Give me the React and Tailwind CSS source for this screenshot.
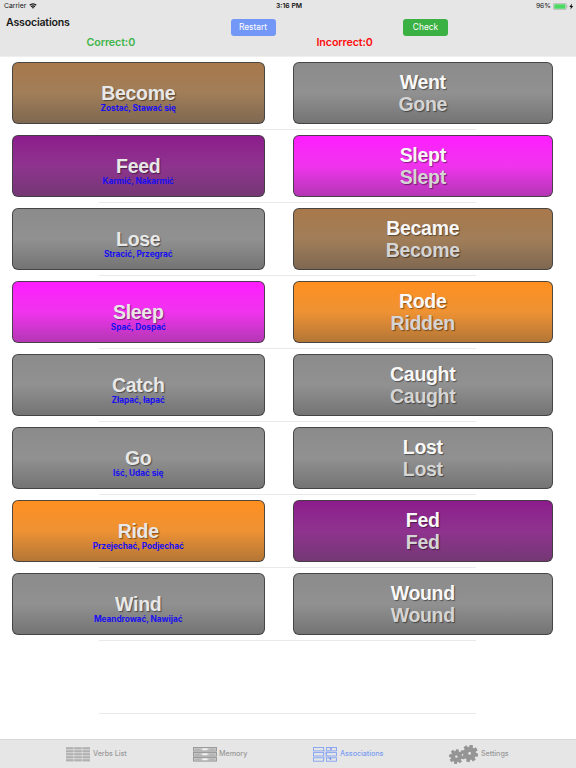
import React from 'react'

const styles = {
  brown: 'bg-linear-to-b from-[#a8784a] via-[#a17e59] to-[#7e6750]',
  purple: 'bg-linear-to-b from-[#8c1a8c] via-[#8f338f] to-[#733873]',
  gray: 'bg-linear-to-b from-[#8b8b8b] via-[#919191] to-[#737373]',
  pink: 'bg-linear-to-b from-[#ff1aff] via-[#f033ee] to-[#b236b2]',
  orange: 'bg-linear-to-b from-[#ff8f1e] via-[#ee9233] to-[#b27536]'
}

const rows = [
  { verb: 'Become', hint: 'Zostać, Stawać się', left: 'brown', past: 'Went', participle: 'Gone', right: 'gray' },
  { verb: 'Feed', hint: 'Karmić, Nakarmić', left: 'purple', past: 'Slept', participle: 'Slept', right: 'pink' },
  { verb: 'Lose', hint: 'Stracić, Przegrać', left: 'gray', past: 'Became', participle: 'Become', right: 'brown' },
  { verb: 'Sleep', hint: 'Spać, Dospać', left: 'pink', past: 'Rode', participle: 'Ridden', right: 'orange' },
  { verb: 'Catch', hint: 'Złapać, łapać', left: 'gray', past: 'Caught', participle: 'Caught', right: 'gray' },
  { verb: 'Go', hint: 'Iść, Udać się', left: 'gray', past: 'Lost', participle: 'Lost', right: 'gray' },
  { verb: 'Ride', hint: 'Przejechać, Podjechać', left: 'orange', past: 'Fed', participle: 'Fed', right: 'purple' },
  { verb: 'Wind', hint: 'Meandrować, Nawijać', left: 'gray', past: 'Wound', participle: 'Wound', right: 'gray' }
]

function WifiIcon() {
  return (
    <svg className="w-2 h-[6px]" viewBox="0 0 18 14" fill="none" stroke="#111" strokeWidth="3">
      <path d="M1.5 5.2a10.6 10.6 0 0 1 15 0" />
      <path d="M4.6 8.6a6.2 6.2 0 0 1 8.8 0" />
      <path d="M9 13.5l-2.6-2.8a3.6 3.6 0 0 1 5.2 0z" fill="#111" stroke="none" />
    </svg>
  )
}

function BatteryIcon() {
  return (
    <svg className="w-[21px] h-[7px]" viewBox="0 0 42 14">
      <rect x="0.7" y="0.7" width="26" height="12.6" rx="2.5" fill="#e6e6e6" stroke="#aaa" strokeWidth="1.4" />
      <rect x="2.5" y="2.5" width="22.4" height="9" rx="1" fill="#4cd964" />
      <path d="M28.3 4.5q2 2.5 0 5z" fill="#999" />
      <path d="M38 1l-5.5 7h3.2L35 13l5.5-7h-3.2z" fill="#111" />
    </svg>
  )
}

function VerbsIcon() {
  return (
    <svg className="w-6 h-[15px]" viewBox="0 0 24 15" fill="#b0b0b0">
      {[0.2, 3.2, 6.2, 9.2, 12.2].map(y =>
        [0, 8.2, 16.4].map(x => <rect key={`${x}-${y}`} x={x} y={y} width="7.6" height="2.2" />)
      )}
    </svg>
  )
}

function MemoryIcon() {
  return (
    <svg className="w-6 h-[15px]" viewBox="0 0 24 15">
      {[0.5, 5.5, 10.5].map(y => (
        <g key={y}>
          <rect x="0.5" y={y} width="23" height="3.6" fill="#c6c6c6" stroke="#959595" strokeWidth="0.9" />
          <rect x="9.3" y={y + 0.9} width="5.2" height="1.8" fill="#f4f4f4" />
          <path d={`M2.5 ${y + 1.8}h5M16.5 ${y + 1.8}h5`} stroke="#adadad" strokeWidth="0.9" />
        </g>
      ))}
    </svg>
  )
}

function AssociationsIcon() {
  return (
    <svg className="w-6 h-[15px]" viewBox="0 0 24 15" fill="none" stroke="#83a2f3" strokeWidth="0.9">
      {[0.5, 5.6, 10.8].map(y => (
        <g key={y}>
          <rect x="0.5" y={y} width="10.1" height="3.4" />
          <rect x="13.4" y={y} width="10.1" height="3.4" />
        </g>
      ))}
      <path d="M10.7 7.5L18 2.4M10.7 2.3L13.3 7.3M14.5 8.5L17.5 12.2M10.7 12.5L13.3 7.5" strokeWidth="0.5" />
      <path d="M16.5 1.6l2.6-.3-.9 2.3zM15.8 11.8l2.5 1.5-.4-2.7z" fill="#6a8df0" stroke="none" />
    </svg>
  )
}

function Gear({ x, y, r, tilt }) {
  return (
    <g transform={`translate(${x} ${y}) rotate(${tilt}) scale(${r / 10})`}>
      {[0, 45, 90, 135, 180, 225, 270, 315].map(a => (
        <path key={a} d="M-2.4-6L-2-10.2h4L2.4-6z" transform={`rotate(${a})`} fill="#959595" />
      ))}
      <circle r="4.7" fill="none" stroke="#959595" strokeWidth="6" />
    </g>
  )
}

function SettingsIcon() {
  return (
    <svg className="w-[29px] h-[19px]" viewBox="0 0 29 19">
      <Gear x={7.4} y={11.6} r={7.2} tilt={8} />
      <Gear x={20.6} y={8.4} r={8.4} tilt={12} />
    </svg>
  )
}

const cardClass = 'h-[62px] rounded-md border border-[#3f3f3f]/90 bg-origin-border text-center font-bold'
const verbClass = "block font-['Liberation_Sans',sans-serif] text-[19.5px] tracking-[-0.3px] [text-shadow:1px_1px_1px_rgba(0,0,0,0.45)]"

export default function App() {
  return (
    <div className="w-[576px] h-[768px] flex flex-col overflow-hidden bg-white font-[Inter,sans-serif]">
      {/* Header */}
      <header className="h-[57px] shrink-0 bg-[#e6e6e6] border-b border-[#efefef]">
        <div className="grid grid-cols-3 items-center h-3 pl-1 pr-0.5 text-[6.8px] leading-3 text-[#111]">
          <div className="flex items-center gap-[3px]">
            <span>Carrier</span>
            <WifiIcon />
          </div>
          <span className="text-center font-semibold">3:16 PM</span>
          <div className="flex items-center justify-end gap-0.5">
            <span>96%</span>
            <BatteryIcon />
          </div>
        </div>
        <div className="flex h-6 pt-[7px]">
          <h1 className="w-[230.5px] pl-1.5 -mt-[3px] text-[10.6px] leading-[14px] tracking-[-0.2px] font-semibold text-[#181818]">Associations</h1>
          <button className="w-[45px] h-[17px] shrink-0 rounded-[3px] bg-[#7397f6] text-[8.4px] leading-[17px] text-white">Restart</button>
          <button className="w-[45px] h-[17px] shrink-0 ml-[127.5px] rounded-[3px] bg-[#3bb143] text-[8.4px] leading-[17px] text-white">Check</button>
        </div>
        <div className="flex text-[10.7px] leading-[14px] tracking-[-0.1px] font-semibold">
          <span className="w-[230px] pl-[86.5px] text-[#3fb54a]">Correct:0</span>
          <span className="pl-[86.5px] text-[#ff0d0d]">Incorrect:0</span>
        </div>
      </header>

      {/* Verb pairs */}
      <main className="flex-1">
        {rows.map(row => (
          <div key={row.verb} className="h-[73px] pt-[5px] pl-[11.5px] flex gap-7 bg-[linear-gradient(#e9e9e9,#e9e9e9)] bg-no-repeat bg-size-[377px_1px] bg-position-[99px_72px]">
            <div className={`${cardClass} ${styles[row.left]} w-[253.5px] pt-5`}>
              <span className={`${verbClass} leading-5 text-[#e8e8e8]`}>{row.verb}</span>
              <span className="block text-[8.3px] leading-[10px] tracking-[-0.06px] text-[#1a10f0]">{row.hint}</span>
            </div>
            <div className={`${cardClass} ${styles[row.right]} w-[259.5px] pt-2`}>
              <span className={`${verbClass} leading-[22px] text-[#f8f8f8]`}>{row.past}</span>
              <span className={`${verbClass} leading-[22px] text-[#d5d5d5]`}>{row.participle}</span>
            </div>
          </div>
        ))}
        <div className="h-[73px] ml-[99px] w-[377px] border-b border-[#e9e9e9]" />
      </main>

      {/* Tab bar */}
      <nav className="h-[29px] shrink-0 flex items-center bg-[#e6e6e6] border-t border-[#d8d8d8] text-[7.2px] tracking-[-0.05px] font-medium text-[#999]">
        <div className="w-[127px] ml-[66px] flex items-center gap-[3px]">
          <VerbsIcon />
          <span>Verbs List</span>
        </div>
        <div className="w-[120px] flex items-center gap-0.5">
          <MemoryIcon />
          <span>Memory</span>
        </div>
        <div className="w-[136px] flex items-center gap-[3px] text-[#7c9df2]">
          <AssociationsIcon />
          <span>Associations</span>
        </div>
        <div className="flex items-center gap-[3px]">
          <SettingsIcon />
          <span>Settings</span>
        </div>
      </nav>
    </div>
  )
}
